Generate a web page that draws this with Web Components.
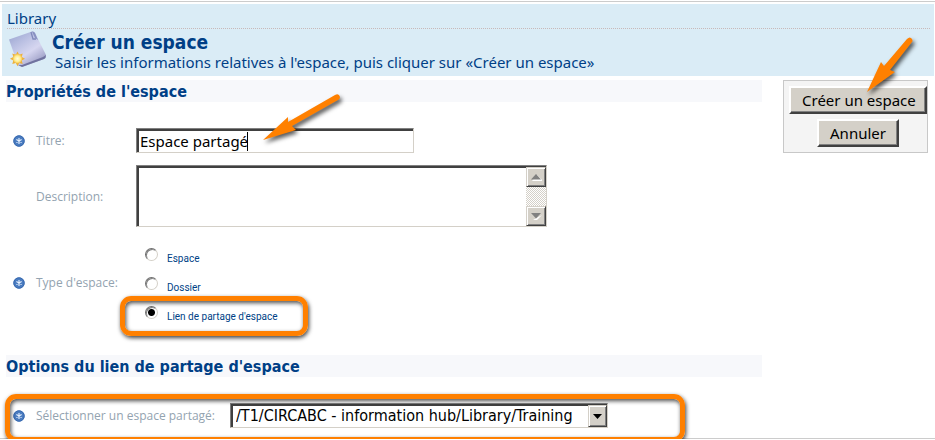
<!DOCTYPE html>
<html lang="fr">
<head>
<meta charset="utf-8">
<title>Créer un espace</title>
<style>
html{overflow:hidden}
body{margin:0;background:#fff;color:#003f86;font:15px/20px "Noto Sans","Open Sans",sans-serif;
--head:"DejaVu Sans Condensed","DejaVu Sans",sans-serif;--small:"Open Sans","Noto Sans",sans-serif;--orange:#ff8000}
</style>
</head>
<body>
<space-page></space-page>
<script>
const define=(name,html,setup)=>{
  const t=document.createElement('template');
  t.innerHTML=html;
  customElements.define(name,class extends HTMLElement{
    connectedCallback(){
      if(this.shadowRoot)return;
      this.attachShadow({mode:'open'}).append(t.content.cloneNode(true));
    }
  });
};

define('required-mark',`<style>:host{display:block;width:12px;height:12px}svg{display:block}</style>
<svg width="12" height="12" viewBox="0 0 12 12" aria-hidden="true"><circle cx="6" cy="6" r="5.7" fill="#4a7cc0"/><circle cx="6" cy="6" r="5.2" fill="none" stroke="#3365ab" stroke-width=".8"/><path d="M6 3v6M3.4 4.500l5.200 3M8.600 4.500L3.400 7.500" stroke="#e8f2ff" stroke-width="1.1"/></svg>`);

define('orange-arrow',`<style>:host{display:block;pointer-events:none}svg{display:block;overflow:visible;filter:drop-shadow(2px 3px 2px rgba(0,0,0,.65))}
.down{display:none}:host([steep]) .down{display:block}:host([steep]) .flat{display:none}</style>
<svg class="flat" width="78" height="48" viewBox="0 0 78 48" aria-hidden="true"><path d="M0 46L25 23 25 28 72 1Q76-1 77 3 77 5 75 6L29 32 33 36Z" fill="#ff8000"/></svg>
<svg class="down" width="46" height="56" viewBox="0 0 46 56" aria-hidden="true"><path d="M0 55L14 25 17 29 40 2Q43-1 45 2 46 4 45 5L23 33 28 35Z" fill="#ff8000"/></svg>`);

define('orange-frame',`<style>:host{display:block;box-sizing:border-box;border:5px solid var(--orange);border-radius:11px;pointer-events:none;box-shadow:1px 2px 4px rgba(0,0,0,.75),inset 1px 2px 4px rgba(0,0,0,.7)}</style>`);

define('space-icon',`<style>:host{display:block}svg{display:block}</style>
<svg width="40" height="40" viewBox="0 0 40 40" aria-hidden="true"><defs>
<linearGradient id="p" x1=".1" y1="0" x2=".8" y2="1"><stop offset="0" stop-color="#9ba5d0"/><stop offset=".3" stop-color="#b9bfe2"/><stop offset=".6" stop-color="#d6d6f0"/><stop offset="1" stop-color="#8e90bb"/></linearGradient>
<radialGradient id="s"><stop offset="0" stop-color="#fffde0"/><stop offset=".6" stop-color="#ffee90"/><stop offset="1" stop-color="#f3c04a"/></radialGradient></defs>
<path d="M2 10.500L25 2.500Q27 2 28 4L39 26Q39 29 37 30L15 38 11 36Z" fill="url(#p)"/><path d="M11 36L15 38 37 30Q39 29 39 26L36 28 15 36Z" fill="#70739f"/><path d="M24 3L26 10 29 10" fill="none" stroke="#7f89bb" stroke-width="1.3"/><path d="M25 2.500Q27 2 28 4L31 11 28 9Z" fill="#8992c2"/>
<path d="M10.500 22.500l1.700 3.200 3.500-1.200-1 3.500 3.300 1.700-3.300 1.700 1 3.500-3.500-1-1.700 3.400-1.700-3.400-3.500 1 1-3.500-3.300-1.700 3.300-1.700-1-3.500 3.500 1.200z" fill="#ecb03a"/><circle cx="10.500" cy="29.700" r="4.800" fill="url(#s)"/></svg>`);

define('page-header',`<style>
:host{display:block;background:#daecf6;margin:0 1px 0 2px;padding:5px 4px 4px 5px}
.crumb{border-bottom:1px dotted #c9b9b9;line-height:19px}
.row{display:flex;gap:5px}
h1{margin:3px 0 0 0;font:bold 19px/20px var(--head)}
p{margin:0 0 0 3px;line-height:20px}
</style>
<div class="crumb"><slot name="crumb"></slot></div>
<div class="row"><space-icon></space-icon><div><h1><slot name="title"></slot></h1><p><slot></slot></p></div></div>`);

define('section-title',`<style>:host{display:block;background:#f7f8fb}h2{margin:0;padding:2px 0 0;font:bold 16px/20px var(--head)}</style><h2><slot></slot></h2>`);

define('action-button',`<style>:host{display:block}
button{display:block;width:100%;height:28px;padding:0 11px;white-space:nowrap;background:#d4d0c8;color:#000;font:15px/22px "Noto Sans",sans-serif;border:2px solid;border-color:#fff #404040 #404040 #fff;box-shadow:inset -1px -1px #808080}</style>
<button type="button"><slot></slot></button>`);

define('action-panel',`<style>:host{display:flex;flex-direction:column;align-items:center;gap:5px;box-sizing:border-box;background:#f4f4f4;border:1px solid #c8c8c8;padding:5px 0 5px 5px;position:relative}
orange-arrow{position:absolute;left:83px;top:-44px}</style><slot></slot><orange-arrow steep></orange-arrow>`);

const fieldBase=`:host{display:grid;grid-template-columns:23px var(--label,100px) 1fr;align-items:center;padding-left:7px;position:relative}
.name{color:#93a3b0;font:12px/18px var(--small);white-space:nowrap}
.box{box-sizing:border-box;border:1px solid;border-color:#808080 #d4d0c8 #d4d0c8 #808080;box-shadow:inset 1px 1px #404040,inset 2px 2px #404040;background:#fff}`;

define('title-field',`<style>${fieldBase}
.wrap{position:relative;width:278px}
input{display:block;width:100%;height:25px;margin:0;padding:0 3px;color:#000;font:15px/20px "Noto Sans",sans-serif;outline:0}
.caret{position:absolute;left:111px;top:4px;width:1px;height:19px;background:#000}
orange-arrow{position:absolute;left:127px;top:-34px}
</style><required-mark></required-mark><label class="name" for="t">Titre:</label>
<div class="wrap"><input class="box" id="t" type="text" value="Espace partagé"><span class="caret"></span><orange-arrow></orange-arrow></div>`);

define('classic-scrollbar',`<style>:host{display:flex;flex-direction:column;justify-content:space-between;width:20px;margin-top:1px;background:repeating-conic-gradient(#d4d0c8 0 25%,#fff 0 50%) 0 0/2px 2px}
span{display:grid;place-items:center;box-sizing:border-box;height:20px;background:#d4d0c8;border:1px solid;border-color:#d4d0c8 #404040 #404040 #d4d0c8;box-shadow:inset 1px 1px #fff,inset -1px -1px #808080}svg{display:block}</style>
<span><svg width="11" height="7"><path d="M1 7h10v-1L6 1z" fill="#fff"/><path d="M0 5.500h10L5 0z" fill="#808080"/></svg></span>
<span><svg width="11" height="7"><path d="M2 7h4l5-5z" fill="#fff"/><path d="M0 0h10L5 5.500z" fill="#808080"/></svg></span>`);

define('description-field',`<style>${fieldBase}
.name{padding-top:2px}
.box{display:flex;width:411px;height:62px}
textarea{flex:1;min-width:0;margin:2px 0 0 2px;padding:2px;border:0;resize:none;overflow:hidden;background:transparent;font:15px/20px "Noto Sans",sans-serif;outline:0}
</style><span></span><label class="name" for="d">Description:</label>
<div class="box"><textarea id="d"></textarea><classic-scrollbar></classic-scrollbar></div>`);

define('type-field',`<style>${fieldBase}
required-mark,.name{margin-bottom:17px}
.list{display:grid;grid-auto-rows:29px;justify-items:start;padding-left:9px}
.option{display:flex;gap:9px;position:relative;font:10px/14px Roboto,sans-serif}
label{padding-top:4px}
input{appearance:none;box-sizing:border-box;width:13px;height:13px;margin:0;border-radius:50%;border:1px solid;border-color:#707070 #d4d0c8 #d4d0c8 #707070;background:#fff;box-shadow:inset 1px 1px #808080}
input:checked{background:radial-gradient(circle at 50% 50%,#000 0 3px,#fff 4px)}
orange-frame{position:absolute;left:-25px;top:-10px;width:188px;height:40px}
</style><required-mark></required-mark><span class="name" id="n">Type d'espace:</span>
<div class="list" role="radiogroup" aria-labelledby="n">
<div class="option"><input type="radio" name="k" id="a"><label for="a">Espace</label></div>
<div class="option"><input type="radio" name="k" id="b"><label for="b">Dossier</label></div>
<div class="option"><input type="radio" name="k" id="c" checked><label for="c">Lien de partage d'espace</label><orange-frame></orange-frame></div></div>`);

define('share-field',`<style>${fieldBase}
:host{--label:194px}
.wrap{position:relative;width:378px}
select{appearance:none;display:block;width:100%;height:25px;margin:0;padding:1px 24px 0 5px;border-radius:0;color:#000;font:16px/20px var(--head);outline:0}
.drop{position:absolute;right:1px;top:2px;display:grid;place-items:center;box-sizing:border-box;width:19px;height:22px;background:#d4d0c8;border:1px solid;border-color:#d4d0c8 #404040 #404040 #d4d0c8;box-shadow:inset 1px 1px #fff,inset -1px -1px #808080;pointer-events:none}
orange-frame{position:absolute;left:-1px;top:-9px;width:680px;height:48px}
</style><required-mark></required-mark><label class="name" for="s">Sélectionner un espace partagé:</label>
<div class="wrap"><select class="box" id="s"><option>/T1/CIRCABC - information hub/Library/Training</option></select><span class="drop"><svg width="9" height="5"><path d="M0 0h9L4.500 5z"/></svg></span></div><orange-frame></orange-frame>`);

define('space-page',`<style>
:host{display:block;border-top:1px solid #fff}
.top{border-top:1px solid #ccc;margin-bottom:2px}
main{display:grid;grid-template-columns:minmax(0,1fr) 145px;gap:21px;align-items:start;padding:4px 7px 0 6px}
form{display:grid}
title-field{margin-top:26px}
description-field{margin-top:12px}
type-field{margin:21px 0 20px}
share-field{margin-top:26px}
footer{border-top:1px solid #ccc;margin-top:10px}
</style>
<div class="top"></div>
<page-header><span slot="crumb">Library</span><span slot="title">Créer un espace</span>Saisir les informations relatives à l'espace, puis cliquer sur «Créer un espace»</page-header>
<main><form>
<section-title>Propriétés de l'espace</section-title>
<title-field></title-field><description-field></description-field><type-field></type-field>
<section-title>Options du lien de partage d'espace</section-title>
<share-field></share-field>
</form>
<action-panel><action-button style="align-self:stretch">Créer un espace</action-button><action-button>Annuler</action-button></action-panel></main>
<footer></footer>`);
</script>
</body>
</html>
